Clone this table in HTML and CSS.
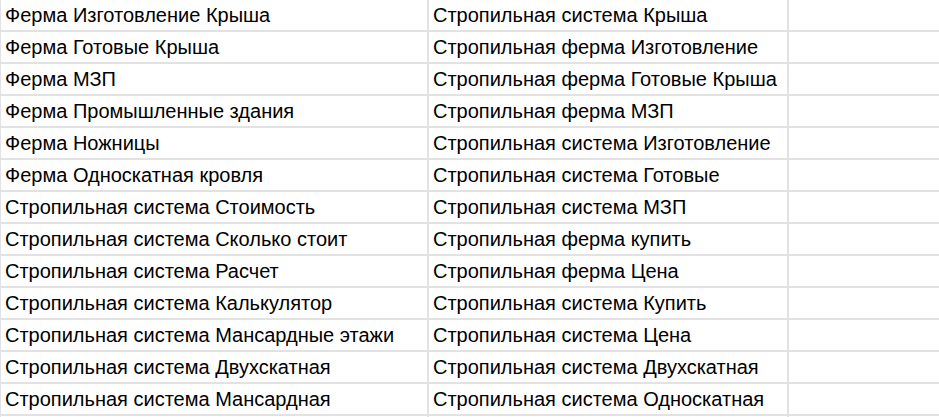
FILE: index.html
```html
<!DOCTYPE html>
<html lang="ru">
<head>
<meta charset="utf-8">
<link rel="stylesheet" href="styles.css">
</head>
<body>
<div class="sheet">
  <div class="cell">Ферма Изготовление Крыша</div><div class="cell">Стропильная система Крыша</div><div class="cell"></div>
  <div class="cell">Ферма Готовые Крыша</div><div class="cell">Стропильная ферма Изготовление</div><div class="cell"></div>
  <div class="cell">Ферма МЗП</div><div class="cell">Стропильная ферма Готовые Крыша</div><div class="cell"></div>
  <div class="cell">Ферма Промышленные здания</div><div class="cell">Стропильная ферма МЗП</div><div class="cell"></div>
  <div class="cell">Ферма Ножницы</div><div class="cell">Стропильная система Изготовление</div><div class="cell"></div>
  <div class="cell">Ферма Односкатная кровля</div><div class="cell">Стропильная система Готовые</div><div class="cell"></div>
  <div class="cell">Стропильная система Стоимость</div><div class="cell">Стропильная система МЗП</div><div class="cell"></div>
  <div class="cell">Стропильная система Сколько стоит</div><div class="cell">Стропильная ферма купить</div><div class="cell"></div>
  <div class="cell">Стропильная система Расчет</div><div class="cell">Стропильная ферма Цена</div><div class="cell"></div>
  <div class="cell">Стропильная система Калькулятор</div><div class="cell">Стропильная система Купить</div><div class="cell"></div>
  <div class="cell">Стропильная система Мансардные этажи</div><div class="cell">Стропильная система Цена</div><div class="cell"></div>
  <div class="cell">Стропильная система Двухскатная</div><div class="cell">Стропильная система Двухскатная</div><div class="cell"></div>
  <div class="cell">Стропильная система Мансардная</div><div class="cell">Стропильная система Односкатная</div><div class="cell"></div>
  <div class="cell"></div><div class="cell"></div><div class="cell"></div>
</div>
</body>
</html>
```

FILE: styles.css
```css
html, body {
  margin: 0;
  padding: 0;
  background: #ffffff;
  overflow: hidden;
}
.sheet {
  box-sizing: border-box;
  width: 939px;
  height: 417px;
  overflow: hidden;
  display: grid;
  grid-template-columns: 426px 358px 1fr;
  grid-auto-rows: 30px;
  gap: 2px;
  padding-left: 1px;
  background: #e2e2e2;
}
.cell {
  background: #ffffff;
  font-family: "Liberation Sans", Arial, sans-serif;
  font-size: 20px;
  line-height: 30px;
  color: #000000;
  padding-left: 4px;
  white-space: nowrap;
  overflow: hidden;
}
```
